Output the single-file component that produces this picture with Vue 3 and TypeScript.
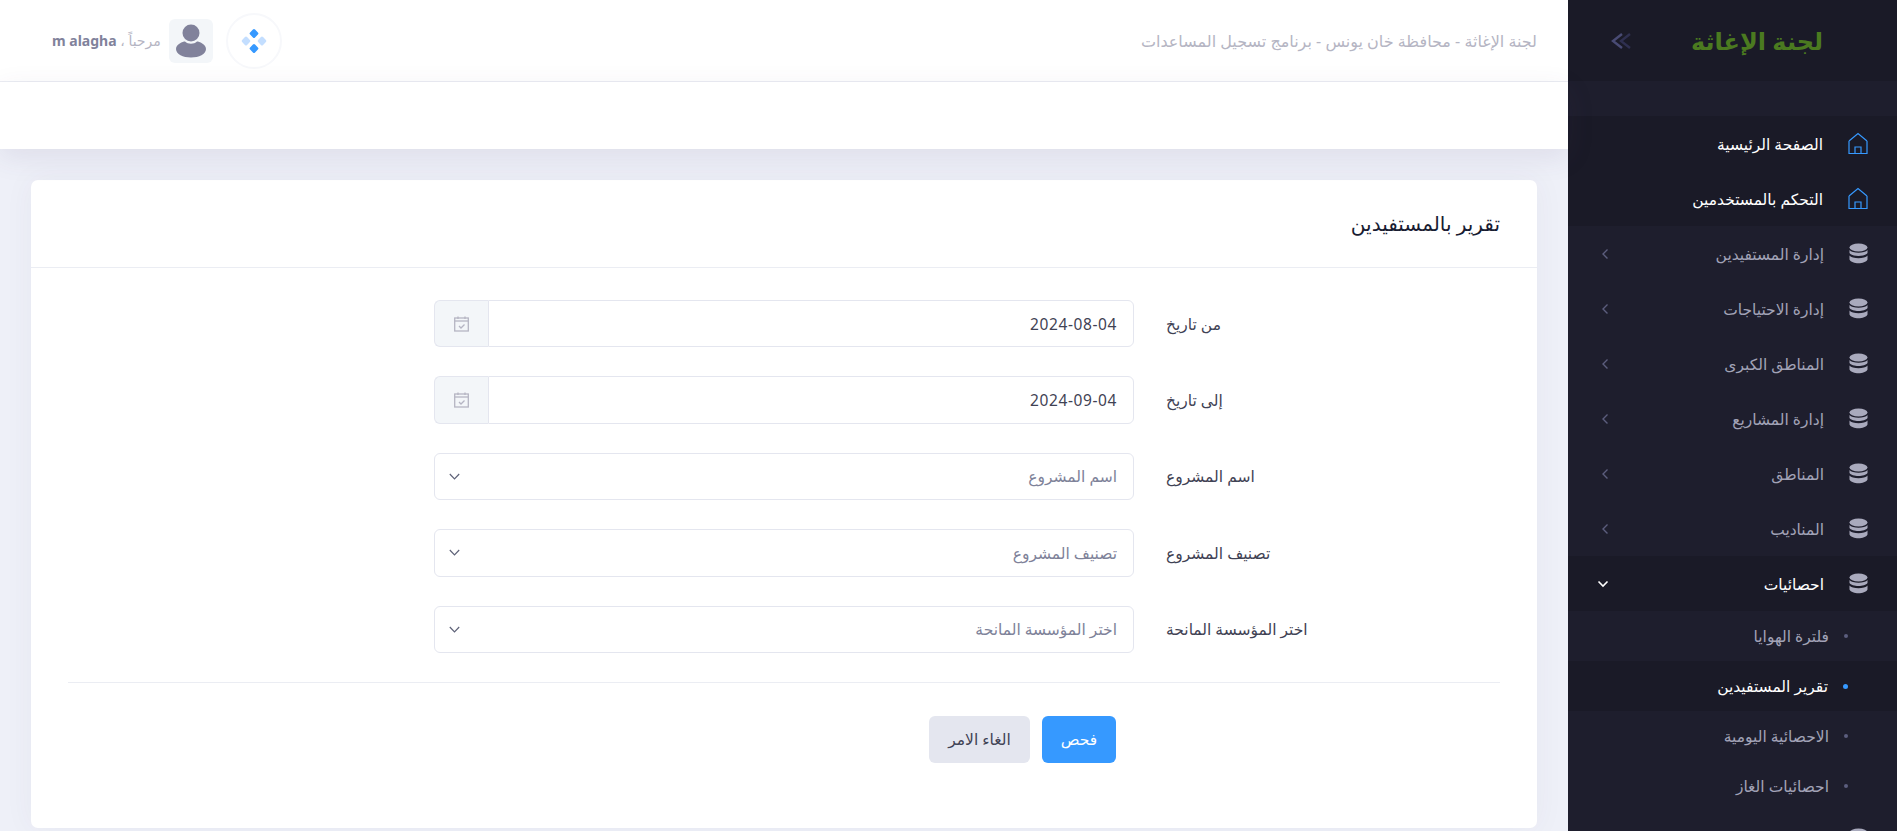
<script setup lang="ts">
interface Field { label: string; value: string; kind: 'date' | 'select' }
interface MenuItem { label: string; arrow: boolean }
const fields: Field[] = [
  { label: 'من تاريخ', value: '2024-08-04', kind: 'date' },
  { label: 'إلى تاريخ', value: '2024-09-04', kind: 'date' },
  { label: 'اسم المشروع', value: 'اسم المشروع', kind: 'select' },
  { label: 'تصنيف المشروع', value: 'تصنيف المشروع', kind: 'select' },
  { label: 'اختر المؤسسة المانحة', value: 'اختر المؤسسة المانحة', kind: 'select' },
]
const topItems = ['الصفحة الرئيسية', 'التحكم بالمستخدمين']
const dbItems: MenuItem[] = [
  { label: 'إدارة المستفيدين', arrow: true },
  { label: 'إدارة الاحتياجات', arrow: true },
  { label: 'المناطق الكبرى', arrow: true },
  { label: 'إدارة المشاريع', arrow: true },
  { label: 'المناطق', arrow: true },
  { label: 'المناديب', arrow: true },
]
const subItems = ['فلترة الهوايا', 'تقرير المستفيدين', 'الاحصائية اليومية', 'احصائيات الغاز']
</script>

<template>
  <div class="app" dir="rtl">
    <aside class="side">
      <div class="brand">
        <span class="logo">لجنة الإغاثة</span>
        <svg class="toggle" width="22" height="18" viewBox="0 0 22 18" fill="none">
          <path d="M20 2 L11 9 L20 16" stroke="#2f3050" stroke-width="2.4" />
          <path d="M12 2 L3 9 L12 16" stroke="#494b74" stroke-width="2.4" />
        </svg>
      </div>
      <div class="spacer"></div>
      <nav class="menu">
        <a v-for="t in topItems" :key="t" class="item dark">
          <svg class="ic" width="20" height="23" viewBox="0 0 20 23" fill="none" stroke="#3699ff" stroke-width="1.2">
            <path d="M1 9 L10 1.500 L19 9 M1 9 V21.500 H19 V9" />
            <path d="M7 21.500 V15 H13 V21.500" />
          </svg>
          <span class="lbl on">{{ t }}</span>
        </a>
        <a v-for="m in dbItems" :key="m.label" class="item">
          <svg class="ic" width="19" height="21" viewBox="0 0 19 21" fill="#a9aabd">
            <ellipse cx="9.5" cy="4.500" rx="9" ry="4" />
            <path d="M.5 7 C3 10.500 16 10.500 18.500 7 V10 C16 14 3 14 .5 10 Z" />
            <path d="M.5 12.500 C3 16 16 16 18.500 12.500 V16.500 C16 21.500 3 21.500 .5 16.500 Z" />
          </svg>
          <span class="lbl">{{ m.label }}</span>
          <svg class="arrow" width="8" height="12" viewBox="0 0 8 12" fill="none" stroke="#5c5e7e" stroke-width="1.4">
            <path d="M6.500 1.500 L2 6 L6.500 10.500" />
          </svg>
        </a>
        <a class="item dark">
          <svg class="ic" width="19" height="21" viewBox="0 0 19 21" fill="#a9aabd">
            <ellipse cx="9.5" cy="4.500" rx="9" ry="4" />
            <path d="M.5 7 C3 10.500 16 10.500 18.500 7 V10 C16 14 3 14 .5 10 Z" />
            <path d="M.5 12.500 C3 16 16 16 18.500 12.500 V16.500 C16 21.500 3 21.500 .5 16.500 Z" />
          </svg>
          <span class="lbl on">احصائيات</span>
          <svg class="arrow open" width="12" height="8" viewBox="0 0 12 8" fill="none" stroke="#fff" stroke-width="1.6">
            <path d="M1.500 1.500 L6 6 L10.500 1.500" />
          </svg>
        </a>
        <a v-for="(s, i) in subItems" :key="s" class="sub" :class="{ cur: i === 1 }">
          <i class="dot"></i>
          <span>{{ s }}</span>
        </a>
        <a class="item">
          <svg class="ic" width="19" height="21" viewBox="0 0 19 21" fill="#a9aabd">
            <ellipse cx="9.5" cy="4.500" rx="9" ry="4" />
          </svg>
        </a>
      </nav>
    </aside>

    <main class="main">
      <header class="top">
        <div class="title">لجنة الإغاثة - محافظة خان يونس - برنامج تسجيل المساعدات</div>
        <div class="user">
          <div class="circle">
            <svg width="26" height="26" viewBox="0 0 26 26">
              <rect x="9.500" y="2" width="7" height="7" rx="1.500" transform="rotate(45 13 5.500)" fill="#3699ff" />
              <rect x="9.500" y="17" width="7" height="7" rx="1.500" transform="rotate(45 13 20.500)" fill="#3699ff" />
              <rect x="1.500" y="9.500" width="7" height="7" rx="1.500" transform="rotate(45 5 13)" fill="#c3deff" />
              <rect x="17.500" y="9.500" width="7" height="7" rx="1.500" transform="rotate(45 21 13)" fill="#c3deff" />
            </svg>
          </div>
          <div class="avatar">
            <svg width="32" height="34" viewBox="0 0 32 34" fill="#81829b">
              <circle cx="16" cy="9" r="8.500" />
              <path d="M1 25 C1 20 8 17.500 10 17.500 C13 20.500 19 20.500 22 17.500 C24 17.500 31 20 31 25 C31 30 24 33.500 16 33.500 C8 33.500 1 30 1 25 Z" />
            </svg>
          </div>
          <div class="hello"><span class="hi">مرحباً ،</span> <b>m alagha</b></div>
        </div>
      </header>
      <div class="subhead"></div>
      <section class="content">
        <div class="card">
          <h3 class="card-title">تقرير بالمستفيدين</h3>
          <div class="card-body">
            <div v-for="f in fields" :key="f.label" class="row">
              <label class="field-label">{{ f.label }}</label>
              <div v-if="f.kind === 'date'" class="group">
                <div class="input date">{{ f.value }}</div>
                <div class="addon">
                  <svg width="15" height="16" viewBox="0 0 15 16" fill="none" stroke="#b5b5c3" stroke-width="1.300">
                    <rect x=".7" y="2" width="13.600" height="13" />
                    <path d="M.7 5 H14.300" />
                    <path d="M4 .5 V3 M11 .5 V3" />
                    <path d="M5 10 L7 12 L10.500 8.500" />
                  </svg>
                </div>
              </div>
              <div v-else class="input select">
                <span>{{ f.value }}</span>
                <svg width="11" height="7" viewBox="0 0 11 7" fill="none" stroke="#5e6278" stroke-width="1.200">
                  <path d="M.8 1 L5.500 5.800 L10.200 1" />
                </svg>
              </div>
            </div>
            <div class="actions">
              <button class="btn primary" type="button">فحص</button>
              <button class="btn ghost" type="button">الغاء الامر</button>
            </div>
          </div>
        </div>
      </section>
    </main>
  </div>
</template>

<style>
html, body { margin: 0; overflow: hidden; }
</style>

<style scoped>
.app {
  display: flex;
  width: 1897px;
  height: 831px;
  overflow: hidden;
  background: #eef0f8;
  font-family: "Noto Sans", "DejaVu Sans", sans-serif;
  font-size: 15px;
  color: #3f4254;
}
.side { width: 329px; flex: none; background: #1e1e2d; overflow: hidden; }
.brand {
  height: 81px;
  background: #1a1a27;
  display: flex;
  align-items: center;
  justify-content: space-between;
  padding: 0 74px 0 42px;
}
.logo { color: #4b7a20; font-size: 24px; font-weight: 700; white-space: nowrap; }
.spacer { height: 35px; }
.item {
  height: 55px;
  display: flex;
  align-items: center;
  padding: 0 29px 0 33px;
}
.item.dark { background: #1a1a27; }
.ic { flex: none; }
.lbl { flex: 1; margin-right: 25px; color: #a2a3b7; font-size: 15.500px; white-space: nowrap; }
.lbl.on { color: #fff; }
.arrow { flex: none; }
.arrow.open { margin-left: -4px; }
.sub {
  height: 50px;
  display: flex;
  align-items: center;
  color: #a2a3b7;
  font-size: 15.500px;
  padding-right: 49px;
}
.sub.cur { background: #1a1a27; color: #fff; }
.dot { width: 4px; height: 4px; border-radius: 50%; background: #5c5e7e; margin-left: 15px; }
.sub.cur .dot { width: 5px; height: 5px; background: #3699ff; }
.main { flex: 1; min-width: 0; display: flex; flex-direction: column; }
.top {
  height: 82px;
  box-sizing: border-box;
  flex: none;
  background: #fff;
  border-bottom: 1px solid #ebedf3;
  display: flex;
  align-items: center;
  justify-content: space-between;
  padding: 0 31px 0 52px;
}
.title { color: #b5b5c3; font-size: 16px; white-space: nowrap; }
.user { display: flex; align-items: center; }
.circle {
  width: 56px;
  height: 56px;
  box-sizing: border-box;
  border: 2px solid #f7f8fb;
  border-radius: 50%;
  display: flex;
  align-items: center;
  justify-content: center;
  margin-left: 13px;
}
.avatar {
  width: 44px;
  height: 44px;
  background: #f3f6f9;
  border-radius: 6px;
  display: flex;
  align-items: center;
  justify-content: center;
  margin-left: 8px;
}
.hello { font-size: 14px; white-space: nowrap; color: #81829b; }
.hi { color: #b5b5c3; }
.hello b { font-weight: 700; }
.subhead {
  height: 67px;
  flex: none;
  background: #fff;
  box-shadow: 0 8px 28px rgba(82, 63, 105, 0.1);
  position: relative;
}
.content { flex: 1; padding: 31px 31px 0; min-height: 0; }
.card {
  background: #fff;
  border-radius: 7px;
  box-shadow: 0 0 30px rgba(82, 63, 105, 0.05);
  height: 648px;
  box-sizing: border-box;
}
.card-title {
  margin: 0;
  height: 88px;
  box-sizing: border-box;
  border-bottom: 1px solid #ebedf3;
  padding: 0 37px;
  display: flex;
  align-items: center;
  font-size: 20px;
  font-weight: 500;
  color: #181c32;
}
.card-body { padding: 32px 37px 0; }
.row {
  display: grid;
  grid-template-columns: 366px 700px;
  align-items: center;
  margin-bottom: 29px;
}
.field-label { text-align: left; padding-left: 32px; font-size: 15.500px; color: #3f4254; }
.group { display: flex; height: 47.4px; }
.input {
  box-sizing: border-box;
  height: 47.4px;
  border: 1px solid #e4e6ef;
  border-radius: 6px;
  background: #fff;
  padding: 0 16px 0 14px;
  display: flex;
  align-items: center;
  font-size: 15.500px;
  color: #3f4254;
}
.date { flex: 1; border-radius: 0 6px 6px 0; direction: rtl; letter-spacing: 0.6px; }
.addon {
  width: 54px;
  box-sizing: border-box;
  border: 1px solid #e4e6ef;
  border-right: 0;
  background: #f3f6f9;
  border-radius: 6px 0 0 6px;
  display: flex;
  align-items: center;
  justify-content: center;
}
.select { justify-content: space-between; color: #7e8299; }
.actions {
  border-top: 1px solid #ebedf3;
  margin-top: 28px;
  padding: 33px 384px 0 0;
  display: flex;
  gap: 12px;
}
.btn {
  height: 47px;
  border: 0;
  border-radius: 6px;
  font-family: inherit;
  font-size: 15.500px;
}
.primary { width: 74px; background: #3699ff; color: #fff; }
.ghost { width: 101px; background: #e4e6ef; color: #3f4254; }
</style>
